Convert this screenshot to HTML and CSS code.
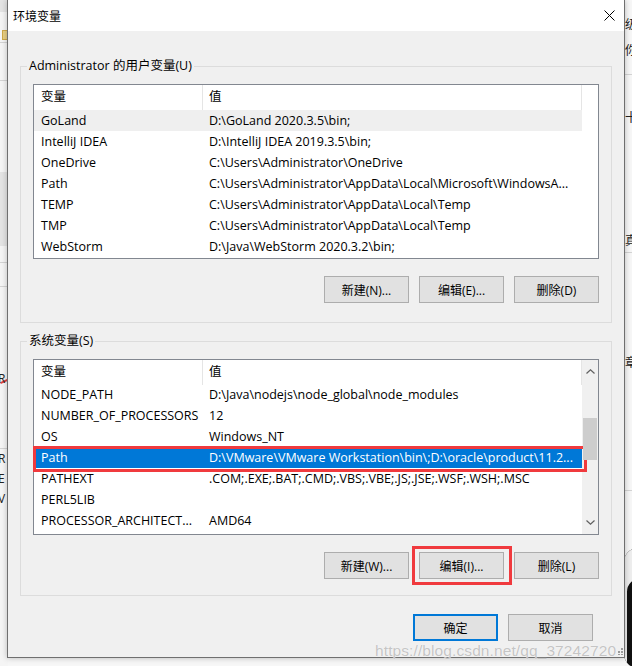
FILE: index.html
```html
<!DOCTYPE html>
<html>
<head>
	<meta charset="utf-8">
	<title>环境变量</title>
	<link rel="stylesheet" href="styles.css">
</head>
<body>
	<!-- 窗口后面露出来的桌面 -->
	<div class="desk desk-left">
		<i class="bar b1"></i>
		<i class="icon"></i>
		<i class="line l1"></i>
		<i class="line l2"></i>
		<i class="bar b2"></i>
		<i class="line l3"></i>
		<i class="line l4"></i>
		<i class="red"></i>
		<span class="ch c1">R</span>
		<span class="ch c2">R</span>
		<span class="ch c3">E</span>
		<span class="ch c4">V</span>
		<i class="line l5"></i>
	</div>
	<div class="desk desk-right">
		<span class="ch r1">级</span>
		<span class="ch r2">你</span>
		<i class="line l6"></i>
		<span class="ch r3">十</span>
		<span class="ch r4">真</span>
		<i class="line l7"></i>
		<span class="ch r5">章</span>
		<i class="line l8"></i>
		<i class="blob"></i>
	</div>

	<div class="dialog">
		<div class="titlebar">
			<span class="title">环境变量</span>
			<svg class="close" width="11" height="11" viewBox="0 0 11 11">
				<path d="M0.5 0.5L10.5 10.5M10.5 0.5L0.5 10.5" stroke="#000" stroke-width="1"/>
			</svg>
		</div>

		<div class="content">
			<fieldset class="group">
				<legend>Administrator 的用户变量(U)</legend>
				<div class="list">
					<div class="table">
						<div class="head">
							<div class="c-name">变量</div>
							<div class="c-value">值</div>
						</div>
						<div class="row hover"><span class="c-name">GoLand</span><span class="c-value">D:\GoLand 2020.3.5\bin;</span></div>
						<div class="row"><span class="c-name">IntelliJ IDEA</span><span class="c-value">D:\IntelliJ IDEA 2019.3.5\bin;</span></div>
						<div class="row"><span class="c-name">OneDrive</span><span class="c-value">C:\Users\Administrator\OneDrive</span></div>
						<div class="row"><span class="c-name">Path</span><span class="c-value">C:\Users\Administrator\AppData\Local\Microsoft\WindowsA...</span></div>
						<div class="row"><span class="c-name">TEMP</span><span class="c-value">C:\Users\Administrator\AppData\Local\Temp</span></div>
						<div class="row"><span class="c-name">TMP</span><span class="c-value">C:\Users\Administrator\AppData\Local\Temp</span></div>
						<div class="row"><span class="c-name">WebStorm</span><span class="c-value">D:\Java\WebStorm 2020.3.2\bin;</span></div>
					</div>
				</div>
				<div class="buttons">
					<button class="btn">新建(N)...</button>
					<button class="btn">编辑(E)...</button>
					<button class="btn">删除(D)</button>
				</div>
			</fieldset>

			<fieldset class="group sys">
				<legend>系统变量(S)</legend>
				<div class="list">
					<div class="table">
						<div class="head">
							<div class="c-name">变量</div>
							<div class="c-value">值</div>
						</div>
						<div class="row"><span class="c-name">NODE_PATH</span><span class="c-value">D:\Java\nodejs\node_global\node_modules</span></div>
						<div class="row"><span class="c-name">NUMBER_OF_PROCESSORS</span><span class="c-value">12</span></div>
						<div class="row"><span class="c-name">OS</span><span class="c-value">Windows_NT</span></div>
						<div class="row selected mark"><span class="c-name">Path</span><span class="c-value">D:\VMware\VMware Workstation\bin\;D:\oracle\product\11.2...</span></div>
						<div class="row"><span class="c-name">PATHEXT</span><span class="c-value">.COM;.EXE;.BAT;.CMD;.VBS;.VBE;.JS;.JSE;.WSF;.WSH;.MSC</span></div>
						<div class="row"><span class="c-name">PERL5LIB</span><span class="c-value"></span></div>
						<div class="row"><span class="c-name">PROCESSOR_ARCHITECT...</span><span class="c-value">AMD64</span></div>
					</div>
					<div class="scrollbar">
						<svg class="arrow" width="9" height="5" viewBox="0 0 9 5"><path d="M0.5 4.5L4.5 0.8L8.5 4.5" fill="none" stroke="#606060" stroke-width="1.2"/></svg>
						<div class="track"><div class="thumb"></div></div>
						<svg class="arrow" width="9" height="5" viewBox="0 0 9 5"><path d="M0.5 0.5L4.5 4.2L8.5 0.5" fill="none" stroke="#606060" stroke-width="1.2"/></svg>
					</div>
				</div>
				<div class="buttons">
					<button class="btn">新建(W)...</button>
					<button class="btn mark">编辑(I)...</button>
					<button class="btn">删除(L)</button>
				</div>
			</fieldset>

			<div class="footer">
				<button class="btn default">确定</button>
				<button class="btn">取消</button>
			</div>
		</div>

		<svg class="grip" width="7" height="7" viewBox="0 0 7 7">
			<rect x="5" y="0" width="2" height="2" fill="#999"/>
			<rect x="5" y="3" width="2" height="2" fill="#999"/>
			<rect x="2" y="3" width="2" height="2" fill="#999"/>
			<rect x="5" y="6" width="2" height="1" fill="#999"/>
			<rect x="2" y="6" width="2" height="1" fill="#999"/>
		</svg>
	</div>

	<div class="watermark">https://blog.csdn.net/qq_37242720</div>
</body>
</html>
```

FILE: styles.css
```css
*{
	box-sizing: border-box;
	margin: 0;
	padding: 0;
}
body{
	width: 632px;
	height: 666px;
	overflow: hidden;
	position: relative;
	background: #f7f7f7;
	font-family: "Open Sans", "Noto Sans CJK SC", sans-serif;
	font-size: 12.5px;
	color: #000;
}

/* 桌面残留 */
.desk{
	position: absolute;
	top: 0;
	height: 666px;
	overflow: hidden;
	font-size: 12px;
}
.desk-left{
	left: 0;
	width: 8px;
	background: #f5f5f5;
}
.desk-right{
	left: 624px;
	width: 8px;
	background: #f7f7f7;
}
.desk i, .desk .ch{
	position: absolute;
	display: block;
}
.desk .bar{
	left: 0;
	width: 8px;
	background: #e4e4e4;
}
.b1{ top: 0; height: 12px; }
.b2{ top: 172px; height: 74px; background: #e6e6e6; }
.desk .icon{
	left: 2px;
	top: 30px;
	width: 6px;
	height: 10px;
	background: #e8cf84;
	border: 1px solid #cfa94a;
}
.desk .line{
	left: 0;
	width: 8px;
	height: 1px;
	background: #d4d4d4;
}
.l1{ top: 42px; }
.l2{ top: 80px; }
.l3{ top: 262px; }
.l4{ top: 286px; }
.l5{ top: 448px; }
.l6{ top: 74px; }
.l7{ top: 252px; }
.l8{ top: 490px; }
.desk .red{
	left: 0;
	top: 380px;
	width: 10px;
	height: 2px;
	background: #e04040;
	transform: rotate(-25deg);
}
.desk .ch{
	font-size: 12px;
	line-height: 14px;
	color: #222;
}
.c1{ left: -2px; top: 372px; }
.c2{ left: -2px; top: 452px; }
.c3{ left: -2px; top: 472px; }
.c4{ left: -2px; top: 492px; }
.r1{ left: 1px; top: 18px; }
.r2{ left: 1px; top: 44px; }
.r3{ left: 1px; top: 111px; }
.r4{ left: 1px; top: 234px; }
.r5{ left: 1px; top: 356px; }
.desk .blob{
	left: 0;
	top: 548px;
	width: 30px;
	height: 120px;
	border-radius: 14px;
	background: #111;
	box-shadow: inset 3px 30px 0 #eee;
}

/* 对话框 */
.dialog{
	position: relative;
	margin-left: 7px;
	width: 618px;
	height: 658px;
	background: #f0f0f0;
	border: 1px solid #6f6f6f;
	border-top: none;
	box-shadow: 0 0 6px rgba(0,0,0,0.25);
}
.titlebar{
	height: 31px;
	background: #fff;
	display: flex;
	align-items: center;
	justify-content: space-between;
	padding: 0 9px 0 5px;
}
.title{
	font-family: "Noto Sans CJK SC", sans-serif;
	font-size: 12px;
	line-height: 16px;
}
.content{
	padding: 27px 12px 0;
}
.group{
	border: 1px solid #dcdcdc;
	padding: 0 12px 19px;
	min-width: 0;
}
.group legend{
	margin-left: -6px;
	padding: 0 2px;
	line-height: 16px;
}
.sys{
	margin-top: 10px;
	padding-bottom: 16px;
}

/* 列表 */
.list{
	margin-top: 10px;
	height: 175px;
	border: 1px solid #828790;
	background: #fff;
	display: flex;
}
.sys .list{
	height: 176px;
}
.table{
	width: 548px;
}
.head{
	height: 25px;
	display: flex;
	align-items: center;
}
.sys .head{
	height: 24px;
}
.head div{
	height: 25px;
	line-height: 24px;
	border-right: 1px solid #e5e5e5;
}
.c-name{
	width: 169px;
	padding-left: 7px;
	flex: none;
	white-space: nowrap;
	overflow: hidden;
}
.c-value{
	width: 379px;
	padding-left: 6px;
	flex: none;
	white-space: nowrap;
	overflow: hidden;
}
.row{
	height: 21px;
	line-height: 21px;
	display: flex;
	position: relative;
}
.row.hover{
	background: #efefef;
}
.row.selected{
	background: #0078d7;
	color: #fff;
}
.row.mark::after{
	content: "";
	position: absolute;
	left: -1px;
	top: -1px;
	right: -5px;
	bottom: -4px;
	border: 3px solid #f03a3e;
}

.scrollbar{
	width: 16px;
	background: #f0f0f0;
	display: flex;
	flex-direction: column;
	align-items: center;
}
.arrow{
	flex: none;
	margin: 9px 0;
}
.track{
	flex: 1;
	width: 100%;
	position: relative;
}
.thumb{
	margin: 35px 1px 0;
	height: 42px;
	background: #cdcdcd;
}

/* 按钮 */
.buttons{
	margin-top: 17px;
	display: flex;
	justify-content: flex-end;
	gap: 10px;
}
.btn{
	width: 85px;
	height: 27px;
	border: 1px solid #adadad;
	background: #e1e1e1;
	font-family: "Open Sans", "Noto Sans CJK SC", sans-serif;
	font-size: 12px;
	color: #000;
	position: relative;
}
.btn.default{
	border: 2px solid #0078d7;
}
.btn.mark::after{
	content: "";
	position: absolute;
	left: -8px;
	top: -7px;
	right: -9px;
	bottom: -7px;
	border: 3px solid #f03a3e;
}
.footer{
	margin-top: 18px;
	padding-right: 19px;
	display: flex;
	justify-content: flex-end;
	gap: 10px;
}

.grip{
	position: absolute;
	right: 1px;
	bottom: 2px;
}
.watermark{
	position: absolute;
	left: 375px;
	top: 642px;
	font-family: "Liberation Sans", sans-serif;
	font-size: 15.5px;
	letter-spacing: 0.1px;
	color: rgba(190,190,190,0.9);
	text-shadow: 0 0 1px rgba(255,255,255,0.9);
	white-space: nowrap;
}
```
